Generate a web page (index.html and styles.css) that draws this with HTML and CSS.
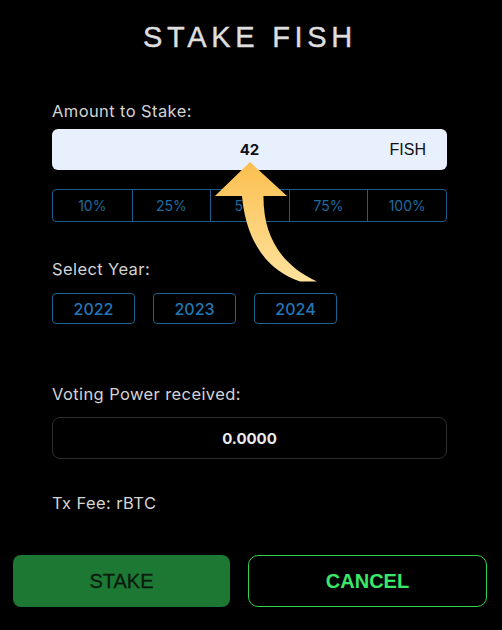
FILE: index.html
```html
<!DOCTYPE html>
<html>
<head>
<meta charset="utf-8">
<link rel="stylesheet" href="styles.css">
</head>
<body>
<div class="page">
  <h1 class="title">STAKE FISH</h1>
  <div class="form">
    <div class="label first">Amount to Stake:</div>
    <div class="amount">
      <span class="amount-value">42</span>
      <span class="amount-unit">FISH</span>
    </div>
    <div class="percents">
      <div class="pct">10%</div>
      <div class="pct">25%</div>
      <div class="pct">50%</div>
      <div class="pct">75%</div>
      <div class="pct">100%</div>
    </div>
    <div class="label year-label">Select Year:</div>
    <div class="years">
      <div class="year">2022</div>
      <div class="year">2023</div>
      <div class="year">2024</div>
    </div>
    <div class="label vp-label">Voting Power received:</div>
    <div class="vp-box">0.0000</div>
    <div class="label fee">Tx Fee: rBTC</div>
  </div>
  <div class="actions">
    <button class="btn stake">STAKE</button>
    <button class="btn cancel">CANCEL</button>
  </div>
  <svg class="arrow" width="502" height="630" viewBox="0 0 502 630">
    <defs>
      <linearGradient id="ag" x1="0" y1="162" x2="0" y2="282" gradientUnits="userSpaceOnUse">
        <stop offset="0" stop-color="#fbbf4f"/>
        <stop offset="1" stop-color="#ffe29d"/>
      </linearGradient>
    </defs>
    <path d="M250 162 L287 196 L263.5 196 C263 236 281 265 317 281.5 L300 281.5 C266 270 246 240 242 196 L215 196 Z" fill="url(#ag)"/>
  </svg>
</div>
</body>
</html>
```
FILE: styles.css
```css
html, body {
  margin: 0;
  padding: 0;
  background: #000;
}
.page {
  position: relative;
  width: 502px;
  height: 630px;
  padding-top: 20px;
  box-sizing: border-box;
  font-family: Inter, "Noto Sans", sans-serif;
}
.title {
  margin: 0;
  font-family: "Liberation Sans", Arial, sans-serif;
  font-weight: normal;
  font-size: 29px;
  line-height: 34px;
  letter-spacing: 4.7px;
  text-align: center;
  color: #dedede;
  padding-right: 2px;
  -webkit-text-stroke: 0.4px #dedede;
}
.form {
  padding-left: 52px;
  width: 395px;
}
.label {
  font-size: 16.5px;
  line-height: 20px;
  letter-spacing: 0.4px;
  color: #d4d4d4;
}
.first { margin-top: 47px; }
.amount {
  margin-top: 8px;
  height: 41px;
  box-sizing: border-box;
  background: #e8f0fe;
  border-radius: 6px;
  position: relative;
  display: flex;
  align-items: center;
  justify-content: center;
}
.amount-value {
  font-weight: 700;
  font-size: 15px;
  color: #111;
}
.amount-unit {
  position: absolute;
  right: 21px;
  top: 11px;
  font-family: "Liberation Sans", Arial, sans-serif;
  font-size: 16px;
  line-height: 20px;
  color: #111;
}
.percents {
  margin-top: 19px;
  height: 33px;
  box-sizing: border-box;
  border: 1px solid #1b5e8c;
  border-radius: 4px;
  display: grid;
  grid-template-columns: repeat(5, 1fr);
}
.pct {
  display: flex;
  align-items: center;
  justify-content: center;
  font-size: 14px;
  color: #1f6b9e;
  border-left: 1px solid #1b5e8c;
}
.pct:first-child { border-left: none; }
.year-label { margin-top: 37px; }
.years {
  margin-top: 14px;
  display: flex;
  gap: 18px;
}
.year {
  width: 83px;
  height: 31px;
  box-sizing: border-box;
  border: 1px solid #1b6392;
  border-radius: 4px;
  display: flex;
  align-items: center;
  justify-content: center;
  font-size: 16px;
  font-weight: 500;
  color: #2378b8;
}
.vp-label { margin-top: 60px; }
.vp-box {
  margin-top: 13px;
  height: 42px;
  box-sizing: border-box;
  border: 1px solid #2e2e2e;
  border-radius: 8px;
  display: flex;
  align-items: center;
  justify-content: center;
  font-weight: 700;
  font-size: 15px;
  color: #ececec;
}
.fee { margin-top: 34px; }
.actions {
  margin-top: 42px;
  padding-left: 13px;
  display: flex;
  gap: 18px;
}
.btn {
  height: 52px;
  box-sizing: border-box;
  font-family: "Liberation Sans", Arial, sans-serif;
  font-size: 20px;
  cursor: pointer;
  padding: 0;
}
.stake {
  width: 217px;
  background: #1c7833;
  border: none;
  border-radius: 8px;
  color: #0a1a0d;
  -webkit-text-stroke: 0.3px #0a1a0d;
}
.cancel {
  width: 239px;
  background: #000;
  border: 1.5px solid #2fd34e;
  border-radius: 10px;
  color: #3ae868;
  font-weight: 700;
}
.arrow {
  position: absolute;
  left: 0;
  top: 0;
  pointer-events: none;
}
```
